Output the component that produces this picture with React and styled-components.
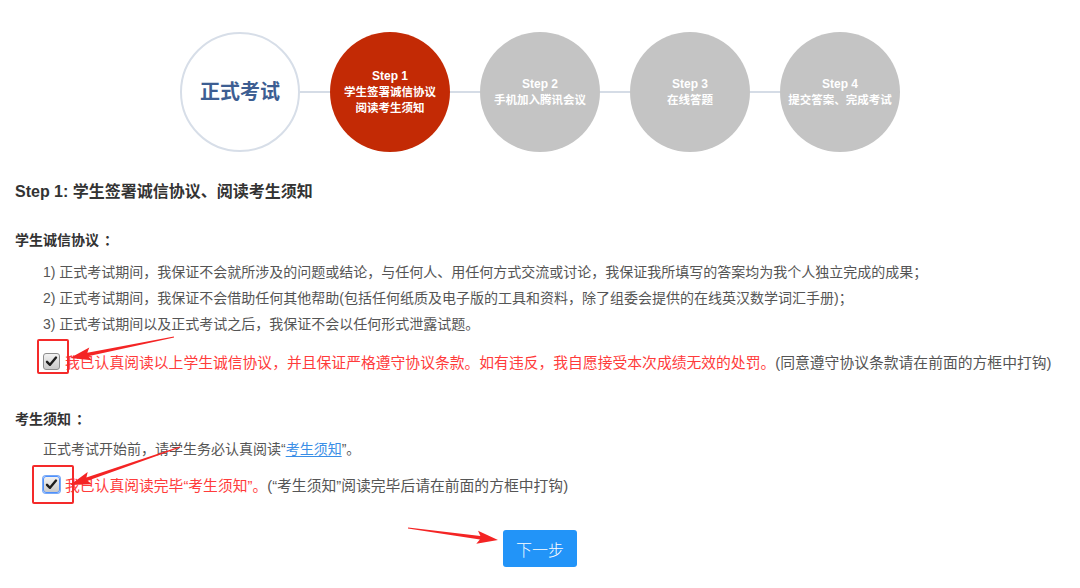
import React from "react";
import styled, { createGlobalStyle } from "styled-components";

const Global = createGlobalStyle`
  html, body { margin: 0; padding: 0; background: #fff; }
  body {
    font-family: "Liberation Sans", "Noto Sans CJK SC", sans-serif;
    text-spacing-trim: space-all;
  }
`;

const Page = styled.div`
  position: relative;
  width: 1080px;
  height: 588px;
  overflow: hidden;
  background: #fff;
  padding-top: 32px;
  box-sizing: border-box;
`;

const Steps = styled.div`
  display: flex;
  justify-content: center;
  align-items: center;
`;

const Circle = styled.div`
  width: 120px;
  height: 120px;
  border-radius: 50%;
  box-sizing: border-box;
  display: flex;
  flex-direction: column;
  align-items: center;
  justify-content: center;
  text-align: center;
  color: #fff;
  font-weight: bold;
  font-size: 11.5px;
  line-height: 16px;
  background: ${(p) => (p.$variant === "active" ? "#c32a05" : p.$variant === "intro" ? "#fff" : "#c4c4c4")};
  border: ${(p) => (p.$variant === "intro" ? "2px solid #d7dee8" : "none")};
`;

const IntroTitle = styled.span`
  font-size: 20px;
  line-height: 24px;
  color: #3d5e92;
  font-weight: bold;
`;

const StepLabel = styled.span`
  font-size: 12px;
  line-height: 16px;
`;

const Connector = styled.div`
  width: 30px;
  height: 2px;
  background: #d5dce6;
`;

const Content = styled.div`
  padding-left: 15px;
  margin-top: 28px;
  color: #555;
`;

const Title = styled.h1`
  margin: 0;
  font-size: 16px;
  line-height: 24px;
  font-weight: bold;
  color: #333;
`;

const SubTitle = styled.h2`
  margin: ${(p) => p.$mt}px 0 0;
  font-size: 14px;
  line-height: 24px;
  font-weight: bold;
  color: #333;
`;

const Colon = styled.span`
  margin-left: 5px;
`;

const List = styled.div`
  margin-top: ${(p) => p.$mt}px;
  padding-left: 28px;
`;

const Line = styled.div`
  font-size: 14px;
  line-height: 26px;
  color: #555;
  white-space: nowrap;
`;

const Link = styled.a`
  color: #3a8ee6;
  text-decoration: underline;
  text-underline-offset: 2px;
`;

const CheckRow = styled.div`
  margin-top: ${(p) => p.$mt}px;
  padding-left: 28px;
  display: flex;
  align-items: center;
  height: 26px;
  font-size: 14.8px;
  white-space: nowrap;
`;

const BoxWrap = styled.span`
  position: relative;
  display: inline-flex;
  margin-right: 5px;
`;

const Box = styled.span`
  width: 17px;
  height: 17px;
  box-sizing: border-box;
  border-radius: 3px;
  border: 1px solid ${(p) => (p.$focus ? "#4d90fe" : "#8e8e8e")};
  box-shadow: ${(p) => (p.$focus ? "0 0 0 1px #79a9f5" : "none")};
  background: linear-gradient(#f3f3f3, #c9c9c9);
  display: flex;
  align-items: center;
  justify-content: center;
`;

const Mark = styled.span`
  position: absolute;
  border: 2px solid #f42a2a;
  border-radius: 2px;
  left: ${(p) => p.$l}px;
  top: ${(p) => p.$t}px;
  width: ${(p) => p.$w}px;
  height: ${(p) => p.$h}px;
  box-sizing: border-box;
  pointer-events: none;
`;

const Red = styled.span`
  color: #ff3b3b;
`;

const Gray = styled.span`
  color: #555;
`;

const Actions = styled.div`
  display: flex;
  justify-content: center;
  margin-top: 33px;
`;

const Button = styled.button`
  width: 74px;
  height: 37px;
  border: none;
  border-radius: 3px;
  background: #2294f8;
  color: #fff;
  font-family: "Noto Sans CJK SC", sans-serif;
  font-size: 16px;
  font-weight: 300;
  cursor: pointer;
  padding: 0;
`;

const Overlay = styled.svg`
  position: absolute;
  left: 0;
  top: 0;
  pointer-events: none;
`;

function arrowPoints(x1, y1, x2, y2, headLen = 18, headW = 13, w0 = 1, w1 = 3.5) {
  const dx = x2 - x1;
  const dy = y2 - y1;
  const len = Math.hypot(dx, dy);
  const ux = dx / len;
  const uy = dy / len;
  const nx = -uy;
  const ny = ux;
  const bx = x2 - ux * headLen;
  const by = y2 - uy * headLen;
  const barbx = bx - ux * 3;
  const barby = by - uy * 3;
  const pts = [
    [x1 + (nx * w0) / 2, y1 + (ny * w0) / 2],
    [bx + (nx * w1) / 2, by + (ny * w1) / 2],
    [barbx + (nx * headW) / 2, barby + (ny * headW) / 2],
    [x2, y2],
    [barbx - (nx * headW) / 2, barby - (ny * headW) / 2],
    [bx - (nx * w1) / 2, by - (ny * w1) / 2],
    [x1 - (nx * w0) / 2, y1 - (ny * w0) / 2],
  ];
  return pts.map((p) => p.map((v) => v.toFixed(1)).join(",")).join(" ");
}

const Check = () => (
  <svg width="13" height="13" viewBox="0 0 13 13">
    <path d="M2 6.8 L5 9.8 L11 2.6" fill="none" stroke="#1e1e1e" strokeWidth="2.4" strokeLinecap="round" strokeLinejoin="round" />
  </svg>
);

const steps = [
  { label: "Step 1", lines: ["学生签署诚信协议", "阅读考生须知"], variant: "active" },
  { label: "Step 2", lines: ["手机加入腾讯会议"] },
  { label: "Step 3", lines: ["在线答题"] },
  { label: "Step 4", lines: ["提交答案、完成考试"] },
];

export default function App() {
  return (
    <Page>
      <Global />
      <Steps>
        <Circle $variant="intro">
          <IntroTitle>正式考试</IntroTitle>
        </Circle>
        {steps.map((s) => (
          <React.Fragment key={s.label}>
            <Connector />
            <Circle $variant={s.variant}>
              <StepLabel>{s.label}</StepLabel>
              {s.lines.map((l) => (
                <span key={l}>{l}</span>
              ))}
            </Circle>
          </React.Fragment>
        ))}
      </Steps>

      <Content>
        <Title>Step 1: 学生签署诚信协议、阅读考生须知</Title>
        <SubTitle $mt={24}>
          学生诚信协议<Colon>：</Colon>
        </SubTitle>
        <List $mt={7}>
          <Line>1) 正式考试期间，我保证不会就所涉及的问题或结论，与任何人、用任何方式交流或讨论，我保证我所填写的答案均为我个人独立完成的成果；</Line>
          <Line>2) 正式考试期间，我保证不会借助任何其他帮助(包括任何纸质及电子版的工具和资料，除了组委会提供的在线英汉数学词汇手册)；</Line>
          <Line>3) 正式考试期间以及正式考试之后，我保证不会以任何形式泄露试题。</Line>
        </List>
        <CheckRow $mt={11}>
          <BoxWrap>
            <Box>
              <Check />
            </Box>
            <Mark $l={-6} $t={-14} $w={32} $h={35} />
          </BoxWrap>
          <Red>我已认真阅读以上学生诚信协议，并且保证严格遵守协议条款。如有违反，我自愿接受本次成绩无效的处罚。</Red>
          <Gray>(同意遵守协议条款请在前面的方框中打钩)</Gray>
        </CheckRow>

        <SubTitle $mt={33}>
          考生须知<Colon>：</Colon>
        </SubTitle>
        <List $mt={5}>
          <Line>
            正式考试开始前，请学生务必认真阅读“<Link>考生须知</Link>”。
          </Line>
        </List>
        <CheckRow $mt={9}>
          <BoxWrap>
            <Box $focus>
              <Check />
            </Box>
            <Mark $l={-11} $t={-11} $w={42} $h={39} />
          </BoxWrap>
          <Red>我已认真阅读完毕“考生须知”。</Red>
          <Gray>(“考生须知”阅读完毕后请在前面的方框中打钩)</Gray>
        </CheckRow>
      </Content>

      <Actions>
        <Button>下一步</Button>
      </Actions>

      <Overlay width="1080" height="588" viewBox="0 0 1080 588">
        <polygon points={arrowPoints(174, 337, 70, 358)} fill="#f42424" />
        <polygon points={arrowPoints(180, 447, 70, 485)} fill="#f42424" />
        <polygon points={arrowPoints(408, 528, 498, 540)} fill="#f42424" />
      </Overlay>
    </Page>
  );
}
